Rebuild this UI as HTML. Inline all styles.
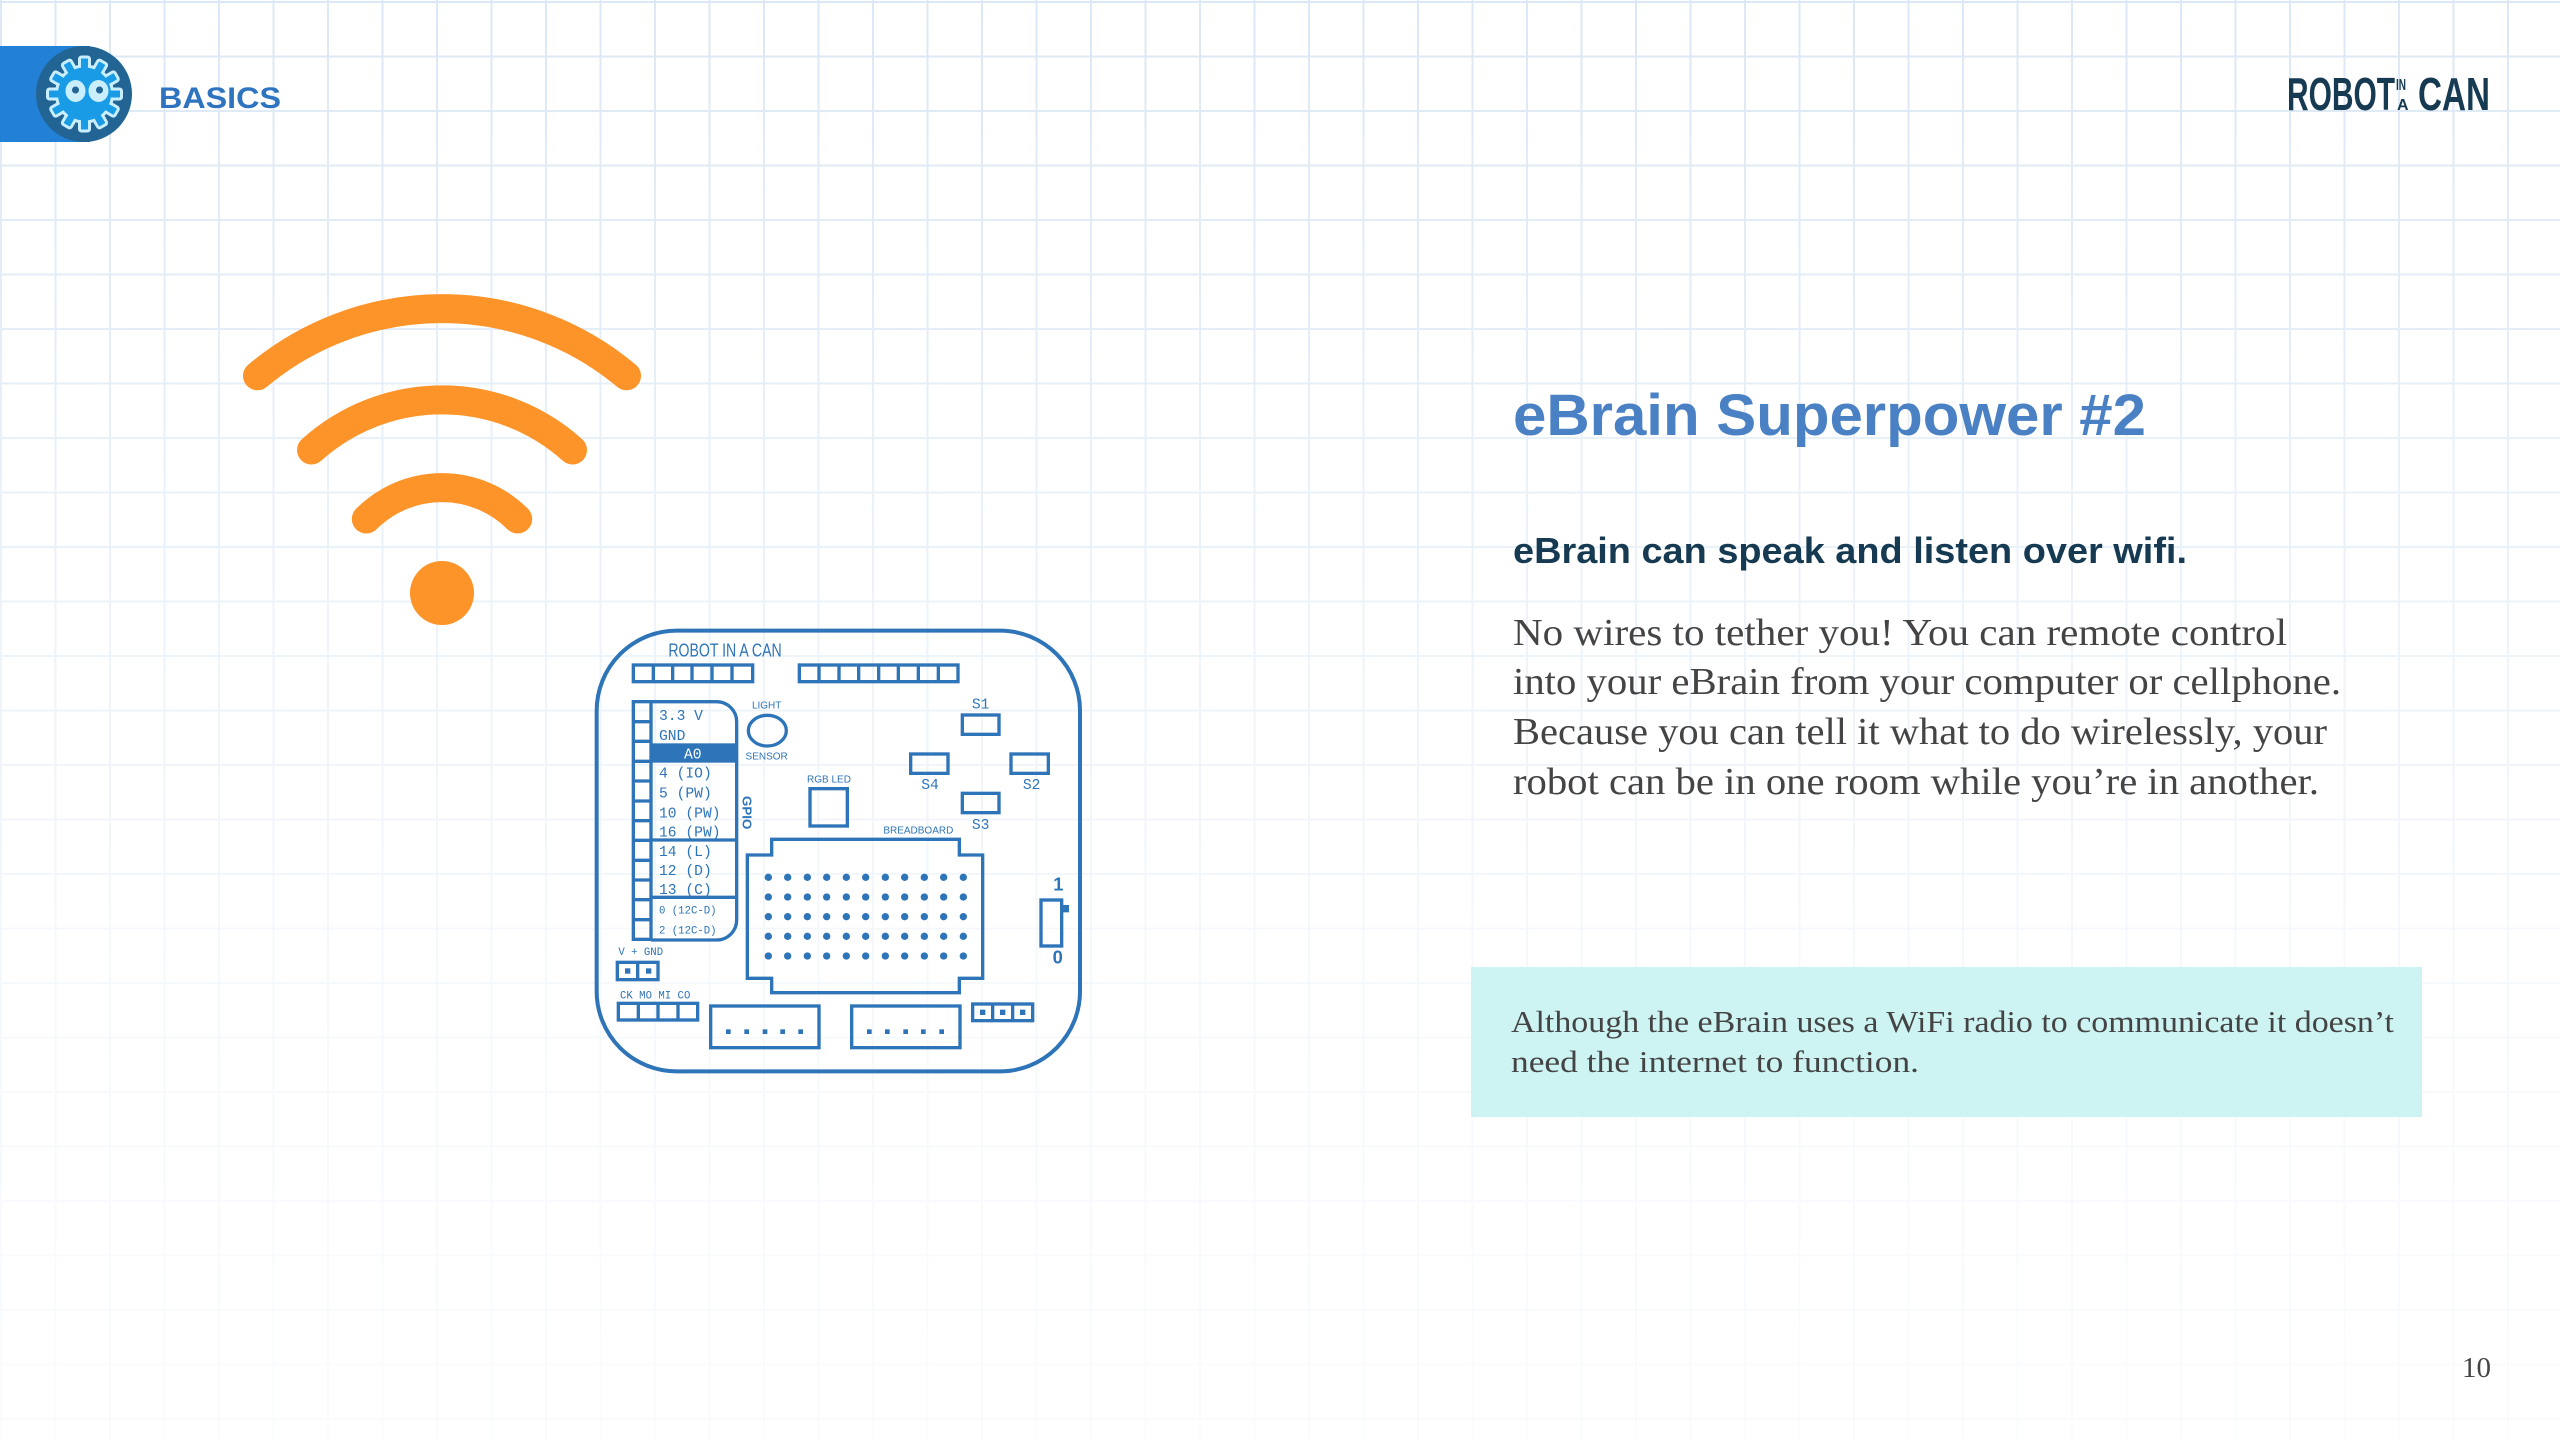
<!DOCTYPE html>
<html><head><meta charset="utf-8"><style>
html,body{margin:0;padding:0;background:#fff;}
body{width:2560px;height:1440px;overflow:hidden;position:relative;}
.grid{position:absolute;left:0;top:0;width:2560px;height:1440px;
background-image:linear-gradient(to right,#dbe8f5 2px,transparent 2px),linear-gradient(to bottom,#dbe8f5 2px,transparent 2px);
background-size:54.5px 54.5px;background-position:0 1px;}
.fade{position:absolute;left:0;top:0;width:2560px;height:1440px;background:linear-gradient(to bottom,rgba(255,255,255,0) 0%,rgba(255,255,255,0.35) 30%,rgba(255,255,255,0.75) 70%,rgba(255,255,255,0.85) 100%);}
svg{position:absolute;left:0;top:0;}
</style></head><body>
<div class="grid"></div><div class="fade"></div>
<svg width="2560" height="1440" viewBox="0 0 2560 1440" xmlns="http://www.w3.org/2000/svg">
<defs>
<rect id="tooth" x="-5" y="-37" width="10" height="12" rx="2"/>
<rect id="toothin" x="-3.5" y="-35.5" width="7" height="12" rx="1"/>
</defs>
<!-- header -->
<rect x="0" y="46" width="90" height="96" fill="#2281d6"/>
<circle cx="84" cy="94" r="48" fill="#226494"/>
<g transform="translate(84.5,94)">
<g fill="#1a9be6" stroke="#c9efff" stroke-width="3">
<use href="#tooth" transform="rotate(0)"/><use href="#tooth" transform="rotate(30)"/><use href="#tooth" transform="rotate(60)"/><use href="#tooth" transform="rotate(90)"/><use href="#tooth" transform="rotate(120)"/><use href="#tooth" transform="rotate(150)"/><use href="#tooth" transform="rotate(180)"/><use href="#tooth" transform="rotate(210)"/><use href="#tooth" transform="rotate(240)"/><use href="#tooth" transform="rotate(270)"/><use href="#tooth" transform="rotate(300)"/><use href="#tooth" transform="rotate(330)"/>
</g>
<circle r="28" fill="#1a9be6" stroke="#c9efff" stroke-width="3"/>
<g fill="#1a9be6">
<use href="#toothin" transform="rotate(0)"/><use href="#toothin" transform="rotate(30)"/><use href="#toothin" transform="rotate(60)"/><use href="#toothin" transform="rotate(90)"/><use href="#toothin" transform="rotate(120)"/><use href="#toothin" transform="rotate(150)"/><use href="#toothin" transform="rotate(180)"/><use href="#toothin" transform="rotate(210)"/><use href="#toothin" transform="rotate(240)"/><use href="#toothin" transform="rotate(270)"/><use href="#toothin" transform="rotate(300)"/><use href="#toothin" transform="rotate(330)"/>
</g>
<ellipse cx="-9" cy="-3" rx="10" ry="11" fill="#c9efff"/>
<ellipse cx="14" cy="-3" rx="10" ry="11" fill="#c9efff"/>
<circle cx="-9" cy="-4" r="3.5" fill="#226494"/>
<circle cx="15" cy="-4" r="3.5" fill="#226494"/>
</g>
<text x="159" y="108" font-family="Liberation Sans, sans-serif" font-weight="bold" font-size="30" fill="#2e73c0" textLength="122" lengthAdjust="spacingAndGlyphs">BASICS</text>
<!-- logo -->
<text x="2287" y="110" font-family="Liberation Sans, sans-serif" font-weight="bold" font-size="46" fill="#163a52" textLength="108" lengthAdjust="spacingAndGlyphs">ROBOT</text>
<text x="2396" y="90" font-family="Liberation Sans, sans-serif" font-weight="bold" font-size="16" fill="#163a52" textLength="10" lengthAdjust="spacingAndGlyphs">IN</text>
<text x="2397" y="110" font-family="Liberation Sans, sans-serif" font-weight="bold" font-size="16" fill="#163a52">A</text>
<text x="2418" y="110" font-family="Liberation Sans, sans-serif" font-weight="bold" font-size="46" fill="#163a52" textLength="72" lengthAdjust="spacingAndGlyphs">CAN</text>
<!-- wifi -->
<g fill="none" stroke="#fd9429" stroke-width="29" stroke-linecap="round">
<path d="M257.5,375.8 A287,287 0 0 1 626.5,375.8"/>
<path d="M311.5,450 A195,195 0 0 1 572.5,450"/>
<path d="M366.3,519 A107,107 0 0 1 517.7,519"/>
</g>
<circle cx="442" cy="593" r="32" fill="#fd9429"/>
<!-- text -->
<text x="1513" y="435" font-family="Liberation Sans, sans-serif" font-weight="bold" font-size="58" fill="#4a80c4" textLength="633" lengthAdjust="spacingAndGlyphs">eBrain Superpower #2</text>
<text x="1513" y="563" font-family="Liberation Sans, sans-serif" font-weight="bold" font-size="36" fill="#153a52" textLength="674" lengthAdjust="spacingAndGlyphs">eBrain can speak and listen over wifi.</text>
<g font-family="Liberation Serif, serif" font-size="38" fill="#444">
<text x="1513" y="645" textLength="774" lengthAdjust="spacingAndGlyphs">No wires to tether you! You can remote control</text>
<text x="1513" y="694" textLength="828" lengthAdjust="spacingAndGlyphs">into your eBrain from your computer or cellphone.</text>
<text x="1513" y="744" textLength="814" lengthAdjust="spacingAndGlyphs">Because you can tell it what to do wirelessly, your</text>
<text x="1513" y="794" textLength="806" lengthAdjust="spacingAndGlyphs">robot can be in one room while you’re in another.</text>
</g>
<rect x="1471" y="967" width="951" height="150" fill="#cdf3f2"/>
<g font-family="Liberation Serif, serif" font-size="31" fill="#444">
<text x="1511" y="1032" textLength="883" lengthAdjust="spacingAndGlyphs">Although the eBrain uses a WiFi radio to communicate it doesn’t</text>
<text x="1511" y="1072" textLength="408" lengthAdjust="spacingAndGlyphs">need the internet to function.</text>
</g>
<text x="2462" y="1377" font-family="Liberation Serif, serif" font-size="29" fill="#444">10</text>
<!-- board -->
<svg x="590" y="620" width="500" height="460" viewBox="0 0 1500 1380">
<g fill="none" stroke="#2e74b8" stroke-width="10">
<rect x="20" y="32" width="1450" height="1322" rx="240" stroke-width="12"/>
<rect x="130" y="135" width="358" height="50"/>
<path d="M190,135v50M248,135v50M306,135v50M366,135v50M426,135v50"/>
<rect x="628" y="135" width="476" height="50"/>
<path d="M687,135v50M747,135v50M806,135v50M866,135v50M925,135v50M985,135v50M1045,135v50"/>
<rect x="130" y="245" width="53" height="713"/>
<path d="M130,305h53M130,364h53M130,424h53M130,483h53M130,543h53M130,602h53M130,661h53M130,721h53M130,780h53M130,839h53M130,899h53"/>
<path d="M183,245 H380 A60,60 0 0 1 440,305 V900 A60,60 0 0 1 380,960 H183"/>
<path d="M183,660H440M183,832H440"/>
<ellipse cx="532" cy="332" rx="57" ry="46"/>
<rect x="660" y="506" width="112" height="112"/>
<rect x="1117" y="285" width="110" height="58"/>
<rect x="962" y="402" width="112" height="58"/>
<rect x="1263" y="402" width="112" height="58"/>
<rect x="1117" y="520" width="110" height="58"/>
<path d="M545,658H1108V705H1178V1075H1108V1118H545V1075H472V705H545Z"/>
<rect x="1353" y="840" width="62" height="138"/>
<rect x="82" y="1027" width="122" height="52"/>
<path d="M143,1027v52"/>
<rect x="85" y="1150" width="238" height="50"/>
<path d="M145,1150v50M204,1150v50M264,1150v50"/>
<rect x="362" y="1158" width="325" height="125"/>
<rect x="785" y="1158" width="325" height="125"/>
<rect x="1148" y="1152" width="180" height="50"/>
<path d="M1208,1152v50M1268,1152v50"/>
</g>
<g fill="#2e74b8">
<rect x="183" y="370" width="257" height="58"/>
<rect x="1415" y="855" width="22" height="22"/>
<rect x="105" y="1045" width="16" height="16"/><rect x="168" y="1045" width="16" height="16"/>
<rect x="408" y="1228" width="14" height="14"/><rect x="463" y="1228" width="14" height="14"/><rect x="518" y="1228" width="14" height="14"/><rect x="571" y="1228" width="14" height="14"/><rect x="625" y="1228" width="14" height="14"/>
<rect x="831" y="1228" width="14" height="14"/><rect x="885" y="1228" width="14" height="14"/><rect x="940" y="1228" width="14" height="14"/><rect x="993" y="1228" width="14" height="14"/><rect x="1048" y="1228" width="14" height="14"/>
<rect x="1170" y="1169" width="16" height="16"/><rect x="1230" y="1169" width="16" height="16"/><rect x="1290" y="1169" width="16" height="16"/>
</g>
<g fill="#2e74b8">
<circle cx="535" cy="772" r="11"/><circle cx="593" cy="772" r="11"/><circle cx="652" cy="772" r="11"/><circle cx="710" cy="772" r="11"/><circle cx="769" cy="772" r="11"/><circle cx="827" cy="772" r="11"/><circle cx="886" cy="772" r="11"/><circle cx="944" cy="772" r="11"/><circle cx="1003" cy="772" r="11"/><circle cx="1061" cy="772" r="11"/><circle cx="1120" cy="772" r="11"/>
<circle cx="535" cy="831" r="11"/><circle cx="593" cy="831" r="11"/><circle cx="652" cy="831" r="11"/><circle cx="710" cy="831" r="11"/><circle cx="769" cy="831" r="11"/><circle cx="827" cy="831" r="11"/><circle cx="886" cy="831" r="11"/><circle cx="944" cy="831" r="11"/><circle cx="1003" cy="831" r="11"/><circle cx="1061" cy="831" r="11"/><circle cx="1120" cy="831" r="11"/>
<circle cx="535" cy="890" r="11"/><circle cx="593" cy="890" r="11"/><circle cx="652" cy="890" r="11"/><circle cx="710" cy="890" r="11"/><circle cx="769" cy="890" r="11"/><circle cx="827" cy="890" r="11"/><circle cx="886" cy="890" r="11"/><circle cx="944" cy="890" r="11"/><circle cx="1003" cy="890" r="11"/><circle cx="1061" cy="890" r="11"/><circle cx="1120" cy="890" r="11"/>
<circle cx="535" cy="949" r="11"/><circle cx="593" cy="949" r="11"/><circle cx="652" cy="949" r="11"/><circle cx="710" cy="949" r="11"/><circle cx="769" cy="949" r="11"/><circle cx="827" cy="949" r="11"/><circle cx="886" cy="949" r="11"/><circle cx="944" cy="949" r="11"/><circle cx="1003" cy="949" r="11"/><circle cx="1061" cy="949" r="11"/><circle cx="1120" cy="949" r="11"/>
<circle cx="535" cy="1008" r="11"/><circle cx="593" cy="1008" r="11"/><circle cx="652" cy="1008" r="11"/><circle cx="710" cy="1008" r="11"/><circle cx="769" cy="1008" r="11"/><circle cx="827" cy="1008" r="11"/><circle cx="886" cy="1008" r="11"/><circle cx="944" cy="1008" r="11"/><circle cx="1003" cy="1008" r="11"/><circle cx="1061" cy="1008" r="11"/><circle cx="1120" cy="1008" r="11"/>
</g>
<g font-family="Liberation Sans, sans-serif" fill="#2e74b8">
<text x="235" y="110" font-size="56" textLength="340" lengthAdjust="spacingAndGlyphs">ROBOT IN A CAN</text>
<text x="530" y="265" font-size="30" text-anchor="middle">LIGHT</text>
<text x="530" y="418" font-size="30" text-anchor="middle">SENSOR</text>
<text x="717" y="488" font-size="30" text-anchor="middle">RGB LED</text>
<text x="985" y="640" font-size="30" text-anchor="middle">BREADBOARD</text>
<text x="1405" y="812" font-size="55" font-weight="bold" text-anchor="middle">1</text>
<text x="1403" y="1030" font-size="55" font-weight="bold" text-anchor="middle">0</text>
</g>
<g font-family="Liberation Mono, monospace" fill="#2e74b8">
<text x="1172" y="265" font-size="44" text-anchor="middle">S1</text>
<text x="1020" y="507" font-size="44" text-anchor="middle">S4</text>
<text x="1325" y="507" font-size="44" text-anchor="middle">S2</text>
<text x="1172" y="627" font-size="44" text-anchor="middle">S3</text>
<g font-size="44">
<text x="207" y="300">3.3 V</text>
<text x="207" y="360">GND</text>
<text x="282" y="415" fill="#fff">A0</text>
<text x="207" y="472">4 (IO)</text>
<text x="207" y="533">5 (PW)</text>
<text x="207" y="592">10 (PW)</text>
<text x="207" y="650">16 (PW)</text>
<text x="207" y="708">14 (L)</text>
<text x="207" y="765">12 (D)</text>
<text x="207" y="822">13 (C)</text>
</g>
<text x="207" y="880" font-size="32">0 (12C-D)</text>
<text x="207" y="940" font-size="32">2 (12C-D)</text>
<text x="85" y="1005" font-size="32">V + GND</text>
<text x="90" y="1135" font-size="32">CK MO MI CO</text>
<text transform="translate(458,528) rotate(90)" font-size="40" font-family="Liberation Sans, sans-serif" font-weight="bold">GPIO</text>
</g>
</svg>
</svg>
</body></html>
